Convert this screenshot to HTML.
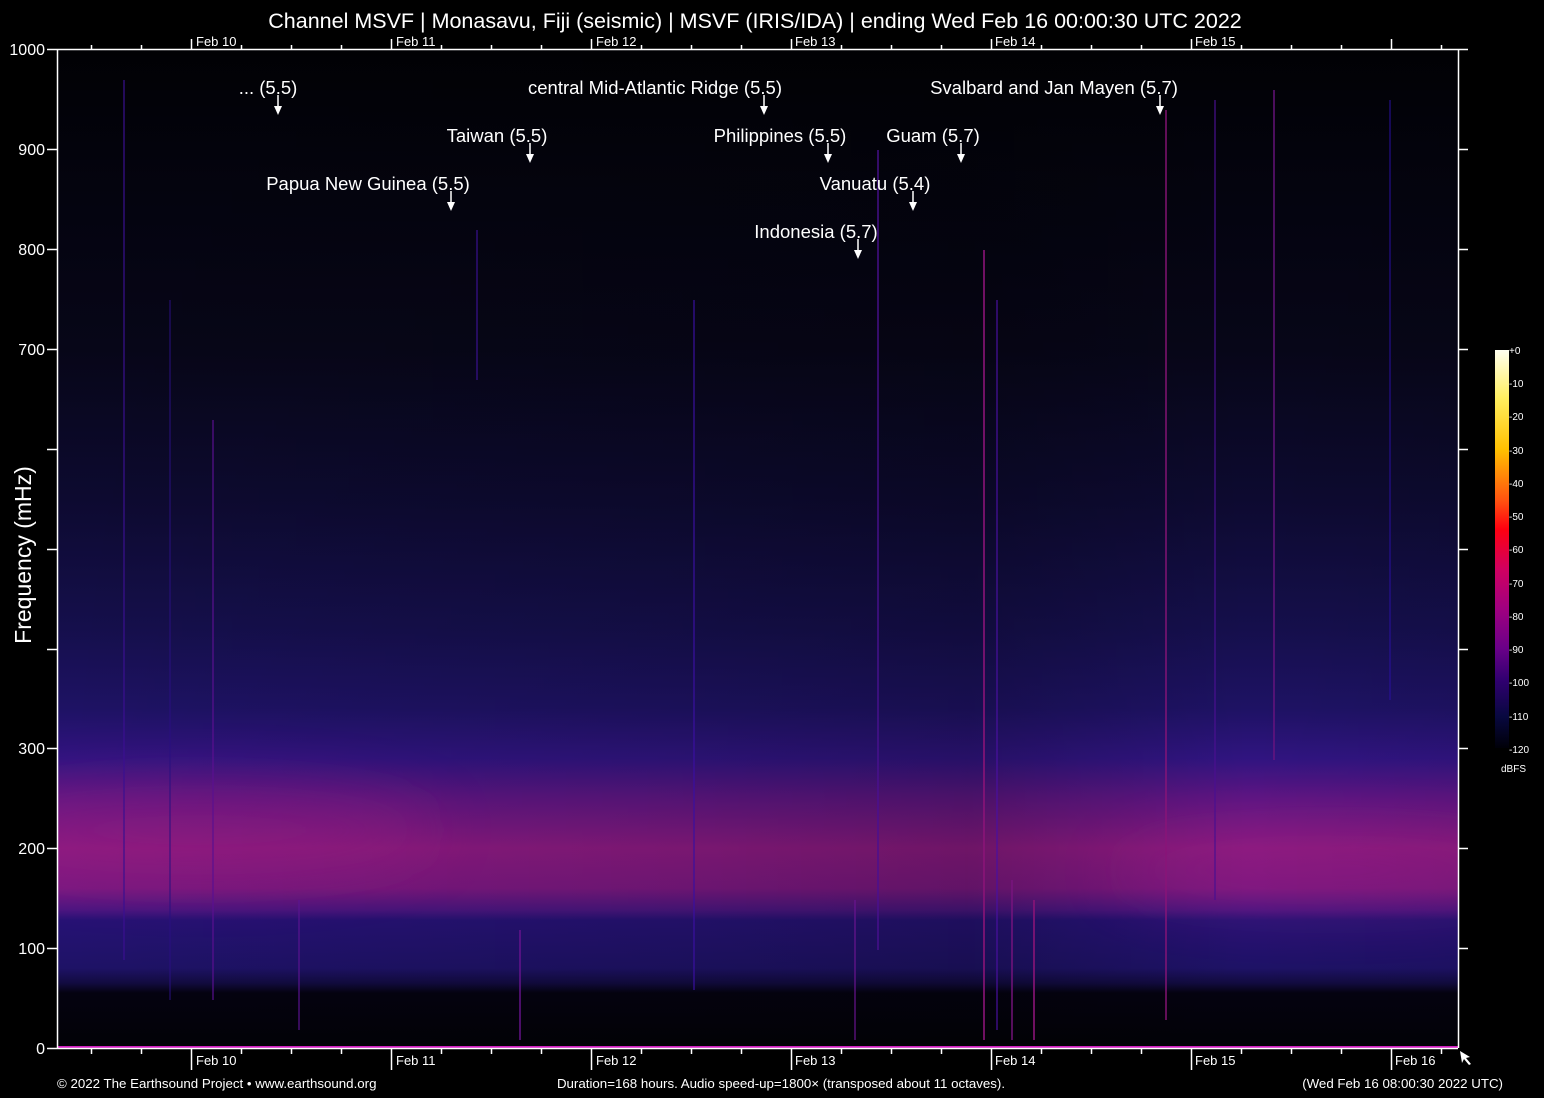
<!DOCTYPE html>
<html><head><meta charset="utf-8"><style>
html,body{margin:0;padding:0;background:#000;}
svg{display:block;}
text{font-family:"Liberation Sans",Arial,sans-serif;fill:#fff;}
</style></head><body>
<svg width="1544" height="1098" viewBox="0 0 1544 1098" xmlns="http://www.w3.org/2000/svg">
<defs>
<clipPath id="pc"><rect x="57" y="49" width="1401" height="999"/></clipPath>
<filter id="bl" x="-50%" y="-100%" width="200%" height="300%"><feGaussianBlur stdDeviation="30"/></filter>
<linearGradient id="bg" x1="0" y1="49" x2="0" y2="1048" gradientUnits="userSpaceOnUse">
<stop offset="0" stop-color="#010104"/>
<stop offset="0.1" stop-color="#03030c"/>
<stop offset="0.3" stop-color="#070618"/>
<stop offset="0.45" stop-color="#0d0a30"/>
<stop offset="0.58" stop-color="#150f4c"/>
<stop offset="0.66" stop-color="#1e1264"/>
<stop offset="0.71" stop-color="#301480"/>
<stop offset="0.75" stop-color="#5e1682"/>
<stop offset="0.8" stop-color="#8a1a80"/>
<stop offset="0.84" stop-color="#7a1880"/>
<stop offset="0.862" stop-color="#4a1680"/>
<stop offset="0.872" stop-color="#261274"/>
<stop offset="0.92" stop-color="#1e1266"/>
<stop offset="0.935" stop-color="#120b40"/>
<stop offset="0.945" stop-color="#040210"/>
<stop offset="1" stop-color="#020206"/>
</linearGradient>
<linearGradient id="hz" x1="57" y1="0" x2="1458" y2="0" gradientUnits="userSpaceOnUse">
<stop offset="0" stop-color="#000" stop-opacity="0"/>
<stop offset="0.45" stop-color="#000" stop-opacity="0.12"/>
<stop offset="0.65" stop-color="#000" stop-opacity="0.2"/>
<stop offset="0.85" stop-color="#000" stop-opacity="0"/>
<stop offset="1" stop-color="#000" stop-opacity="0.05"/>
</linearGradient>
<linearGradient id="cb" x1="0" y1="350" x2="0" y2="748" gradientUnits="userSpaceOnUse">
<stop offset="0" stop-color="#fffff0"/>
<stop offset="0.12" stop-color="#ffef60"/>
<stop offset="0.25" stop-color="#ffc000"/>
<stop offset="0.38" stop-color="#ff5010"/>
<stop offset="0.45" stop-color="#ff0010"/>
<stop offset="0.55" stop-color="#d00060"/>
<stop offset="0.65" stop-color="#a00080"/>
<stop offset="0.75" stop-color="#6a0088"/>
<stop offset="0.83" stop-color="#300070"/>
<stop offset="0.92" stop-color="#080840"/>
<stop offset="1" stop-color="#000008"/>
</linearGradient>
</defs>

<g clip-path="url(#pc)">
<rect x="57" y="49" width="1401" height="999" fill="url(#bg)"/>
<rect x="57" y="49" width="1401" height="999" fill="url(#hz)"/>
<ellipse cx="200" cy="830" rx="240" ry="45" fill="#9a1a80" opacity="0.35" filter="url(#bl)"/>
<ellipse cx="1330" cy="870" rx="220" ry="35" fill="#9a1a80" opacity="0.3" filter="url(#bl)"/>
<g stroke-width="2">
<line x1="124" y1="80" x2="124" y2="960" stroke="#3a1090" opacity="0.6"/>
<line x1="213" y1="420" x2="213" y2="1000" stroke="#5a1090" opacity="0.6"/>
<line x1="170" y1="300" x2="170" y2="1000" stroke="#2a1080" opacity="0.5"/>
<line x1="477" y1="230" x2="477" y2="380" stroke="#3a1090" opacity="0.6"/>
<line x1="694" y1="300" x2="694" y2="990" stroke="#3a10a0" opacity="0.6"/>
<line x1="878" y1="150" x2="878" y2="950" stroke="#4a1090" opacity="0.7"/>
<line x1="984" y1="250" x2="984" y2="1040" stroke="#8a1478" opacity="0.8"/>
<line x1="997" y1="300" x2="997" y2="1030" stroke="#4a10a0" opacity="0.6"/>
<line x1="1012" y1="880" x2="1012" y2="1040" stroke="#7a1480" opacity="0.7"/>
<line x1="1034" y1="900" x2="1034" y2="1040" stroke="#8a1478" opacity="0.8"/>
<line x1="1166" y1="110" x2="1166" y2="1020" stroke="#8a1478" opacity="0.7"/>
<line x1="1215" y1="100" x2="1215" y2="900" stroke="#4a1090" opacity="0.6"/>
<line x1="1274" y1="90" x2="1274" y2="760" stroke="#6a1480" opacity="0.7"/>
<line x1="1390" y1="100" x2="1390" y2="700" stroke="#2a10a0" opacity="0.5"/>
<line x1="520" y1="930" x2="520" y2="1040" stroke="#6a1490" opacity="0.7"/>
<line x1="855" y1="900" x2="855" y2="1040" stroke="#6a1490" opacity="0.6"/>
<line x1="299" y1="900" x2="299" y2="1030" stroke="#5a1490" opacity="0.6"/>
</g>
</g>
<line x1="57" y1="1047" x2="1458" y2="1047" stroke="#d020c0" stroke-width="2"/>

<g stroke="#fff" stroke-width="1.5" fill="none">
<line x1="57.5" y1="49" x2="57.5" y2="1048"/>
<line x1="1458.5" y1="49" x2="1458.5" y2="1048"/>
<line x1="47" y1="49.5" x2="1468" y2="49.5"/>
<line x1="47" y1="1048.5" x2="1458" y2="1048.5"/>
<path d="M47 149.5H57M47 249.5H57M47 349.5H57M47 449.5H57M47 549.5H57M47 649.5H57M47 748.5H57M47 848.5H57M47 948.5H57"/>
<path d="M1458 149.5H1468M1458 249.5H1468M1458 349.5H1468M1458 449.5H1468M1458 549.5H1468M1458 649.5H1468M1458 748.5H1468M1458 848.5H1468M1458 948.5H1468"/>
<path d="M191.5 39V49M391.5 39V49M591.5 39V49M791.5 39V49M991.5 39V49M1191.5 39V49M1391.5 39V49"/>
<path d="M91.5 45V49M141.5 45V49M241.5 45V49M291.5 45V49M341.5 45V49M441.5 45V49M491.5 45V49M541.5 45V49M641.5 45V49M691.5 45V49M741.5 45V49M841.5 45V49M891.5 45V49M941.5 45V49M1041.5 45V49M1091.5 45V49M1141.5 45V49M1241.5 45V49M1291.5 45V49M1341.5 45V49M1441.5 45V49"/>
<path d="M191.5 1048V1070M391.5 1048V1070M591.5 1048V1070M791.5 1048V1070M991.5 1048V1070M1191.5 1048V1070M1391.5 1048V1070"/>
<path d="M91.5 1048V1054M141.5 1048V1054M241.5 1048V1054M291.5 1048V1054M341.5 1048V1054M441.5 1048V1054M491.5 1048V1054M541.5 1048V1054M641.5 1048V1054M691.5 1048V1054M741.5 1048V1054M841.5 1048V1054M891.5 1048V1054M941.5 1048V1054M1041.5 1048V1054M1091.5 1048V1054M1141.5 1048V1054M1241.5 1048V1054M1291.5 1048V1054M1341.5 1048V1054M1441.5 1048V1054"/>
</g>

<g font-size="16" text-anchor="end">
<text x="45" y="55">1000</text>
<text x="45" y="155">900</text>
<text x="45" y="255">800</text>
<text x="45" y="355">700</text>
<text x="45" y="754">300</text>
<text x="45" y="854">200</text>
<text x="45" y="954">100</text>
<text x="45" y="1054">0</text>
</g>
<text x="31" y="555" font-size="23" text-anchor="middle" transform="rotate(-90 31 555)">Frequency (mHz)</text>

<g font-size="13">
<text x="196" y="46">Feb 10</text><text x="396" y="46">Feb 11</text><text x="596" y="46">Feb 12</text><text x="795" y="46">Feb 13</text><text x="995" y="46">Feb 14</text><text x="1195" y="46">Feb 15</text>
<text x="196" y="1065">Feb 10</text><text x="396" y="1065">Feb 11</text><text x="596" y="1065">Feb 12</text><text x="795" y="1065">Feb 13</text><text x="995" y="1065">Feb 14</text><text x="1195" y="1065">Feb 15</text><text x="1395" y="1065">Feb 16</text>
</g>
<path d="M1460 1051l2 12 2-4 5 6 2-1-5-6 4-1z" fill="#fff"/>

<text x="755" y="28" font-size="21.5" text-anchor="middle">Channel MSVF | Monasavu, Fiji (seismic) | MSVF (IRIS/IDA) | ending Wed Feb 16 00:00:30 UTC 2022</text>

<g font-size="13.3">
<text x="57" y="1088">© 2022 The Earthsound Project • www.earthsound.org</text>
<text x="781" y="1088" text-anchor="middle">Duration=168 hours. Audio speed-up=1800× (transposed about 11 octaves).</text>
<text x="1503" y="1088" text-anchor="end">(Wed Feb 16 08:00:30 2022 UTC)</text>
</g>

<g font-size="18.5" text-anchor="middle">
<text x="268" y="94">... (5.5)</text>
<text x="655" y="94">central Mid-Atlantic Ridge (5.5)</text>
<text x="1054" y="94">Svalbard and Jan Mayen (5.7)</text>
<text x="497" y="142">Taiwan (5.5)</text>
<text x="780" y="142">Philippines (5.5)</text>
<text x="933" y="142">Guam (5.7)</text>
<text x="368" y="190">Papua New Guinea (5.5)</text>
<text x="875" y="190">Vanuatu (5.4)</text>
<text x="816" y="238">Indonesia (5.7)</text>
</g>
<g stroke="#fff" stroke-width="1.5">
<line x1="278" y1="95" x2="278" y2="107"/><line x1="764" y1="95" x2="764" y2="107"/><line x1="1160" y1="95" x2="1160" y2="107"/>
<line x1="530" y1="143" x2="530" y2="155"/><line x1="828" y1="143" x2="828" y2="155"/><line x1="961" y1="143" x2="961" y2="155"/>
<line x1="451" y1="191" x2="451" y2="203"/><line x1="913" y1="191" x2="913" y2="203"/>
<line x1="858" y1="239" x2="858" y2="251"/>
</g>
<g fill="#fff">
<path d="M274 106h8l-4 9z"/><path d="M760 106h8l-4 9z"/><path d="M1156 106h8l-4 9z"/>
<path d="M526 154h8l-4 9z"/><path d="M824 154h8l-4 9z"/><path d="M957 154h8l-4 9z"/>
<path d="M447 202h8l-4 9z"/><path d="M909 202h8l-4 9z"/>
<path d="M854 250h8l-4 9z"/>
</g>

<rect x="1495" y="350" width="14" height="398" fill="url(#cb)"/>
<g font-size="10" fill="#ddd">
<text x="1509" y="354">+0</text><text x="1509" y="387">-10</text><text x="1509" y="420">-20</text><text x="1509" y="454">-30</text><text x="1509" y="487">-40</text><text x="1509" y="520">-50</text><text x="1509" y="553">-60</text><text x="1509" y="587">-70</text><text x="1509" y="620">-80</text><text x="1509" y="653">-90</text><text x="1509" y="686">-100</text><text x="1509" y="720">-110</text><text x="1509" y="753">-120</text>
<text x="1501" y="772">dBFS</text>
</g>
</svg>
</body></html>
